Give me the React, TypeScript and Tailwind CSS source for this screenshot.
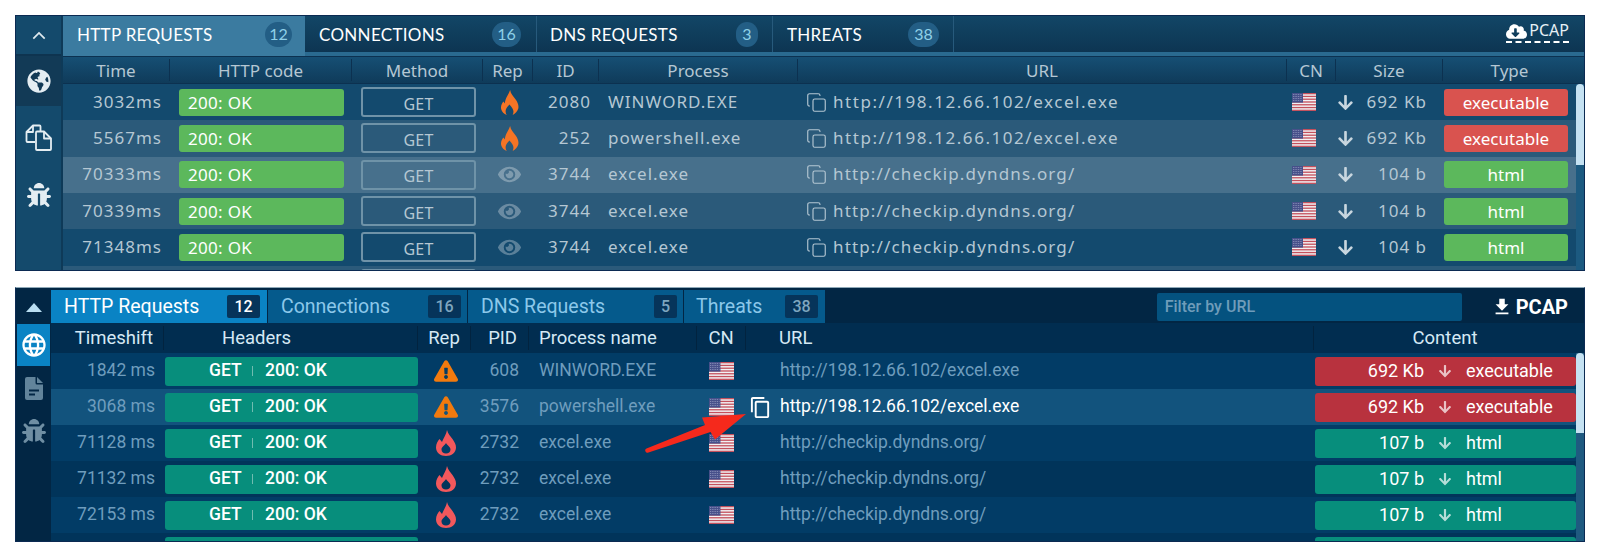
import { Copy } from "lucide-react";
import { FaArrowDown, FaBug, FaCloudDownloadAlt, FaExclamationTriangle, FaEye, FaGlobeAmericas } from "react-icons/fa";
import { MdContentCopy, MdFileDownload, MdLanguage } from "react-icons/md";

const STRIPES = [0, 1, 2, 3, 4, 5, 6];

// small US flag, same in both panels
function Flag({ className }: { className: string }) {
  return (
    <svg viewBox="0 0 24 18" preserveAspectRatio="none" className={className}>
      <rect width="24" height="18" fill="#f1f1f3" />
      {STRIPES.map((i) => (
        <rect key={i} y={i * 2.78} width="24" height="1.3" fill="#c4505c" />
      ))}
      <rect width="11" height="9.6" fill="#47508a" />
      <path d="M1 1.500h9M1 3.500h9M1 5.500h9M1 7.500h9" stroke="#aab0cf" strokeWidth="0.7" strokeDasharray="0.8 0.9" />
    </svg>
  );
}

function FilesIcon() {
  return (
    <svg viewBox="0 0 28 28" className="h-[28px] w-[28px]" fill="none" stroke="#e4edf2" strokeWidth="1.8" strokeLinejoin="round">
      <path d="M10 19H2.500a1 1 0 0 1-1-1V9l6.500-6.500h6.500a1 1 0 0 1 1 1V8" />
      <path d="M8 2.500V9H1.500" />
      <path d="M12 27a1 1 0 0 1-1-1V9.500a1 1 0 0 1 1-1h7l7 7V26a1 1 0 0 1-1 1z" />
      <path d="M19 8.500V15.500h7" />
    </svg>
  );
}

function OrangeFlame() {
  return (
    <svg viewBox="0 0 18 24" preserveAspectRatio="none" className="h-[25px] w-[20px]" fill="#f57425">
      <path d="M10 0c.5 4 3 6 5 9 2 3 3 6 2.300 9-.7 2.500-2.500 4.500-5 6 1-2 1-4.500-.3-6.500-.7-1.200-1.700-2.500-2.700-3.500-1 1.500-2.500 3-3 4.500-.7 2-.3 4 .7 5.500-2.500-1-4.500-3-5-5.500-.7-3 .5-5.500 2-7.500l1.300 2C5.500 8 8.500 5 10 0z" />
    </svg>
  );
}

function RedFlame() {
  return (
    <svg viewBox="0 0 20 26" className="h-[26px] w-[20px]" fill="#f2585c" fillRule="evenodd">
      <path d="M11 0c1 4 3.500 6 5.500 9 2 3 3.500 5.500 3.500 8.500C20 22.500 15.500 26 10 26S0 22.500 0 17.500c0-4 2-6.500 3.500-8.500L6 12C7.500 8 10.500 4 11 0zM10 13c-1.500 2.500-4.500 4-4.500 6.500 0 2.500 2 4 4.500 4s4.500-1.500 4.500-4c0-2.500-3-4-4.500-6.500z" />
    </svg>
  );
}

function FileIcon() {
  return (
    <svg viewBox="0 0 18 23" className="h-[23px] w-[18px]" fill="#62849b" fillRule="evenodd">
      <path d="M2 0h8.500v6a1.500 1.500 0 0 0 1.500 1.500h6V21a2 2 0 0 1-2 2H2a2 2 0 0 1-2-2V2a2 2 0 0 1 2-2zM4 12.500v2h10v-2zM4 16.500v2h6v-2z" />
      <path d="M12 0l6 6h-6z" />
    </svg>
  );
}

const topTabs = [
  { label: "HTTP REQUESTS", count: "12", w: "w-[242px] pl-[14px] pr-[13px]", badge: "w-[27px]", active: true },
  { label: "CONNECTIONS", count: "16", w: "w-[232px] pl-[14px] pr-[15px]", badge: "w-[29px]", active: false },
  { label: "DNS REQUESTS", count: "3", w: "w-[236px] pl-[13px] pr-[14px]", badge: "w-[22px]", active: false },
  { label: "THREATS", count: "38", w: "w-[181px] pl-[14px] pr-[14px]", badge: "w-[31px]", active: false },
];

const topCols = "grid grid-cols-[107px_182px_131px_50px_66px_199px_489px_49px_107px_133px]";

const topHeaders = ["Time", "HTTP code", "Method", "Rep", "ID", "Process", "URL", "CN", "Size", "Type"];

const topRows = [
  { time: "3032ms", id: "2080", process: "WINWORD.EXE", url: "http://198.12.66.102/excel.exe", size: "692 Kb", type: "executable", fire: true, bg: "bg-[#134a6e]" },
  { time: "5567ms", id: "252", process: "powershell.exe", url: "http://198.12.66.102/excel.exe", size: "692 Kb", type: "executable", fire: true, bg: "bg-[#2b5a7a]" },
  { time: "70333ms", id: "3744", process: "excel.exe", url: "http://checkip.dyndns.org/", size: "104 b", type: "html", fire: false, bg: "bg-[#47708c]" },
  { time: "70339ms", id: "3744", process: "excel.exe", url: "http://checkip.dyndns.org/", size: "104 b", type: "html", fire: false, bg: "bg-[#2b5a7a]" },
  { time: "71348ms", id: "3744", process: "excel.exe", url: "http://checkip.dyndns.org/", size: "104 b", type: "html", fire: false, bg: "bg-[#134a6e]" },
];

function TopPanel() {
  return (
    <div className="flex h-[256px] overflow-hidden border border-[#0b2a52] bg-[#144a6c] font-['Noto_Sans',sans-serif]">
      {/* Sidebar */}
      <div className="flex w-[47px] shrink-0 flex-col items-center border-r-2 border-[#0e3a58] text-[#e4edf2]">
        <div className="flex h-[40px] w-full items-center justify-center border-b-2 border-[#0e3450]">
          <svg viewBox="0 0 16 10" className="h-[9px] w-[14px]" fill="none" stroke="#dfe9ef" strokeWidth="2">
            <path d="M1.500 8.500 8 2l6.500 6.500" />
          </svg>
        </div>
        <div className="flex h-[50px] w-full items-center justify-center bg-[#123a56]">
          <FaGlobeAmericas size={24} />
        </div>
        <div className="flex h-[62px] items-center justify-center">
          <FilesIcon />
        </div>
        <div className="flex h-[54px] items-center justify-center">
          <FaBug size={24} />
        </div>
      </div>

      <div className="flex min-w-0 flex-1 flex-col">
        {/* Tabs */}
        <div className="flex h-[40px] shrink-0 items-start justify-between border-b-[4px] border-[#2a6a90] bg-gradient-to-b from-[#124666] to-[#0d3552]">
          <div className="flex h-[40px] font-['Lato',sans-serif]">
            {topTabs.map((tab) => (
              <div
                key={tab.label}
                className={`${tab.w} flex items-center justify-between ${tab.active ? "h-[40px] bg-[#3b7ba0] pb-[4px]" : "h-[36px] border-r border-[#275a7c] bg-gradient-to-b from-[#124666] to-[#0d3552]"}`}
              >
                <span className="text-[17px] leading-none tracking-[0.3px] text-white">{tab.label}</span>
                <span className={`${tab.badge} flex h-[25px] items-center justify-center rounded-full bg-[#235e85] text-[16px] text-[#8fd0e8]`}>{tab.count}</span>
              </div>
            ))}
          </div>
          <div className="mr-[15px] mt-[5px] flex h-[22px] items-start gap-[2px] border-b-2 border-dashed border-white text-[#e8f0f5]">
            <FaCloudDownloadAlt size={21} className="text-white" />
            <span className="text-[16px] leading-[19px]">PCAP</span>
          </div>
        </div>

        {/* Column headers */}
        <div className={`${topCols} h-[28px] shrink-0 items-center border-y border-[#0c3150] bg-gradient-to-b from-[#164f74] to-[#0f3b5a] pr-[8px] text-[#b5c7d3]`}>
          {topHeaders.map((h) => (
            <div key={h} className="flex h-[22px] items-center justify-center border-r border-[#0c3150] text-[17px] leading-none last:border-r-0">
              {h}
            </div>
          ))}
        </div>

        {/* Rows */}
        <div className="relative min-h-0 flex-1 bg-[#1c5a80] pr-[8px]">
          {topRows.map((row, i) => (
            <div key={i} className={`${topCols} ${row.bg} h-[36.33px] items-center text-[17px] leading-none tracking-[1px] text-[#b5c7d3]`}>
              <div className="pb-[2px] pr-[8px] text-right">{row.time}</div>
              <div className="pl-[9px]">
                <div className="flex h-[27px] w-[165px] items-center rounded-[3px] bg-[#5cb85c] pl-[9px] tracking-[0.3px] text-white">200: OK</div>
              </div>
              <div className="pl-[9px]">
                <div className="flex h-[30px] w-[115px] items-center justify-center rounded-[3px] border-2 border-[#6f93a8] pt-[3px] text-[16px] tracking-[0.2px]">GET</div>
              </div>
              <div className="flex justify-center pl-[2px]">
                {row.fire ? <OrangeFlame /> : <FaEye size={23} className="text-white/30" />}
              </div>
              <div className="pb-[2px] pr-[8px] text-right">{row.id}</div>
              <div className="pb-[2px] pl-[9px]">{row.process}</div>
              <div className={`flex items-center pl-[8px] ${row.fire ? "tracking-[1.55px]" : "tracking-[1.15px]"}`}>
                <Copy size={21} strokeWidth={1.3} className="mr-[6px] text-[#b5c7d3]" />
                <span className="pb-[2px]">{row.url}</span>
              </div>
              <div className="pl-[5px]"><Flag className="h-[18px] w-[24px]" /></div>
              <div className="flex items-center justify-between pl-[1px] pr-[16px]">
                <FaArrowDown size={17} className="text-[#c8d6df]" />
                <span className="pb-[2px]">{row.size}</span>
              </div>
              <div className="pl-[1px]">
                <div className={`flex h-[27px] w-[124px] items-center justify-center rounded-[3px] tracking-normal text-white ${row.type === "executable" ? "bg-[#d9534f]" : "bg-[#5cb85c]"}`}>{row.type}</div>
              </div>
            </div>
          ))}
          {/* next row, cut off by the panel */}
          <div className={`${topCols} h-[36.33px] items-start bg-[#2b5a7a]`}>
            <div />
            <div className="pl-[9px] pt-[5px]"><div className="h-[27px] w-[165px] rounded-[3px] bg-[#5cb85c]" /></div>
            <div className="pl-[9px] pt-[3px]"><div className="h-[30px] w-[115px] rounded-[3px] border-2 border-[#6f93a8]" /></div>
          </div>
          <div className="absolute right-0 top-0 h-[81px] w-[8px] rounded-t-[4px] bg-[#c5e2f2]" />
        </div>
      </div>
    </div>
  );
}

const botTabs = [
  { label: "HTTP Requests", count: "12", w: "w-[216px] pl-[13px] pr-[7px]", badge: "w-[33px]", active: true },
  { label: "Connections", count: "16", w: "w-[199px] pl-[13px] pr-[6px]", badge: "w-[33px]", active: false },
  { label: "DNS Requests", count: "5", w: "w-[215px] pl-[13px] pr-[6px]", badge: "w-[23px]", active: false },
  { label: "Threats", count: "38", w: "w-[141px] pl-[12px] pr-[7px]", badge: "w-[33px]", active: false },
];

const botCols = "grid grid-cols-[113px_254px_53px_58px_168px_49px_568px_262px]";

const botRows = [
  { time: "1842 ms", pid: "608", process: "WINWORD.EXE", url: "http://198.12.66.102/excel.exe", size: "692 Kb", type: "executable", warn: true, bg: "bg-[#023c66]" },
  { time: "3068 ms", pid: "3576", process: "powershell.exe", url: "http://198.12.66.102/excel.exe", size: "692 Kb", type: "executable", warn: true, bg: "bg-[#12537d]", hover: true },
  { time: "71128 ms", pid: "2732", process: "excel.exe", url: "http://checkip.dyndns.org/", size: "107 b", type: "html", warn: false, bg: "bg-[#023c66]" },
  { time: "71132 ms", pid: "2732", process: "excel.exe", url: "http://checkip.dyndns.org/", size: "107 b", type: "html", warn: false, bg: "bg-[#01345a]" },
  { time: "72153 ms", pid: "2732", process: "excel.exe", url: "http://checkip.dyndns.org/", size: "107 b", type: "html", warn: false, bg: "bg-[#023c66]" },
];

function BottomPanel() {
  return (
    <div className="relative flex h-[255px] overflow-hidden border border-[#0b2a52] border-t-[#8fa9b8] bg-[#022644] pt-[2px] font-['Roboto',sans-serif]">
      {/* Sidebar */}
      <div className="flex w-[35px] shrink-0 flex-col items-center px-[1px]">
        <div className="flex h-[34px] items-center justify-center">
          <svg viewBox="0 0 16 9" className="h-[9px] w-[16px]" fill="#b9def2">
            <path d="M8 0l8 9H0z" />
          </svg>
        </div>
        <div className="flex h-[42px] w-full items-center justify-center bg-[#0a83c4] text-white">
          <MdLanguage size={28} />
        </div>
        <div className="flex h-[44px] items-center justify-center">
          <FileIcon />
        </div>
        <div className="flex h-[42px] items-center justify-center text-[#6f8ea3]">
          <FaBug size={24} />
        </div>
      </div>

      <div className="flex min-w-0 flex-1 flex-col">
        {/* Tabs + filter */}
        <div className="flex h-[33px] shrink-0 items-center justify-between">
          <div className="flex h-[33px] gap-[1px]">
            {botTabs.map((tab) => (
              <div
                key={tab.label}
                className={`${tab.w} flex items-center justify-between ${tab.active ? "bg-[#0a83c4] text-white" : "bg-[#055a8c] text-[#8cc8ea]"}`}
              >
                <span className="text-[19.5px] leading-none">{tab.label}</span>
                <span className={`${tab.badge} flex h-[23px] items-center justify-center rounded-[2px] bg-[#06345a] text-[16px] font-medium ${tab.active ? "text-white" : "text-[#7fa6bf]"}`}>{tab.count}</span>
              </div>
            ))}
          </div>
          <div className="flex items-center">
            <input
              readOnly
              placeholder="Filter by URL"
              className="mr-[29px] h-[28px] w-[305px] rounded-[2px] bg-[#04527f] pl-[8px] text-[16px] font-medium outline-none placeholder:text-[#6f9cba]"
            />
            <div className="mr-[16px] flex items-center text-white">
              <MdFileDownload size={22} />
              <span className="ml-[3px] text-[20px] font-bold leading-none">PCAP</span>
            </div>
          </div>
        </div>

        {/* Column headers */}
        <div className={`${botCols} h-[30px] shrink-0 items-center bg-[#012d50] pr-[8px] text-[18.5px] leading-none text-[#d5e9f5]`}>
          <div className="flex h-[24px] items-center justify-end border-r border-[#02233f] pr-[10px]">Timeshift</div>
          <div className="flex h-[24px] items-center border-r border-[#02233f] pl-[58px]">Headers</div>
          <div className="flex h-[24px] items-center justify-center border-r border-[#02233f]">Rep</div>
          <div className="flex h-[24px] items-center justify-end border-r border-[#02233f] pr-[11px]">PID</div>
          <div className="flex h-[24px] items-center border-r border-[#02233f] pl-[10px]">Process name</div>
          <div className="flex h-[24px] items-center justify-center border-r border-[#02233f]">CN</div>
          <div className="flex h-[24px] items-center border-r border-[#02233f] pl-[33px]">URL</div>
          <div className="flex h-[24px] items-center justify-center">Content</div>
        </div>

        {/* Rows */}
        <div className="relative min-h-0 flex-1 bg-[#1f5a80] pr-[8px]">
          {botRows.map((row, i) => (
            <div key={i} className={`${botCols} ${row.bg} h-[36px] items-center text-[17.5px] leading-none text-[#6f9dbd]`}>
              <div className="pr-[9px] text-right">{row.time}</div>
              <div className="pl-[1px]">
                <div className="flex h-[29px] w-[253px] items-center rounded-[3px] bg-[#078e7c] pl-[44px] font-medium text-white">
                  <span className="w-[43px]">GET</span>
                  <span className="mr-[12px] h-[10px] w-px bg-[#6fbcb0]" />
                  <span>200: OK</span>
                </div>
              </div>
              <div className="flex justify-center pl-[2px]">
                {row.warn ? <FaExclamationTriangle size={24} className="text-[#f27a0e]" /> : <RedFlame />}
              </div>
              <div className="pr-[10px] text-right">{row.pid}</div>
              <div className="pl-[10px]">{row.process}</div>
              <div className="pl-[12px]"><Flag className="h-[18px] w-[25px]" /></div>
              <div className="flex items-center pl-[5px]">
                <span className="w-[29px]">{row.hover && <MdContentCopy size={23} className="-ml-[2px] text-white" />}</span>
                <span className={row.hover ? "text-white" : ""}>{row.url}</span>
              </div>
              <div className="pl-[1px]">
                <div className={`flex h-[29px] w-[261px] items-center rounded-[3px] text-[18px] text-white ${row.type === "executable" ? "bg-[#b8323e]" : "bg-[#078e7c]"}`}>
                  <span className="w-[109px] text-right">{row.size}</span>
                  <span className="flex w-[42px] justify-center opacity-70"><FaArrowDown size={14} /></span>
                  <span>{row.type}</span>
                </div>
              </div>
            </div>
          ))}
          {/* next row, cut off by the panel */}
          <div className={`${botCols} h-[36px] items-start bg-[#01345a]`}>
            <div />
            <div className="pl-[1px] pt-[4px]"><div className="h-[29px] w-[253px] rounded-[3px] bg-[#078e7c]" /></div>
            <div className="col-start-8 pl-[1px] pt-[4px]"><div className="h-[29px] w-[261px] rounded-[3px] bg-[#078e7c]" /></div>
          </div>
          <div className="absolute right-0 top-0 h-[80px] w-[8px] rounded-t-[4px] bg-[#c5e2f2]" />
        </div>
      </div>

      {/* red annotation arrow over the table */}
      <svg className="pointer-events-none absolute left-[629px] top-[122px] h-[44px] w-[104px]" viewBox="0 0 104 44">
        <path d="M1.500 38.500 60 15l-3-7.500L101 4 70 29.500 65.500 22 3.500 42.500a2 2 0 0 1-2-4z" fill="#f5291c" />
      </svg>
    </div>
  );
}

export default function App() {
  return (
    <div className="h-[558px] w-[1600px] bg-white px-[15px] pt-[15px]">
      <TopPanel />
      <div className="h-[16px]" />
      <BottomPanel />
    </div>
  );
}
